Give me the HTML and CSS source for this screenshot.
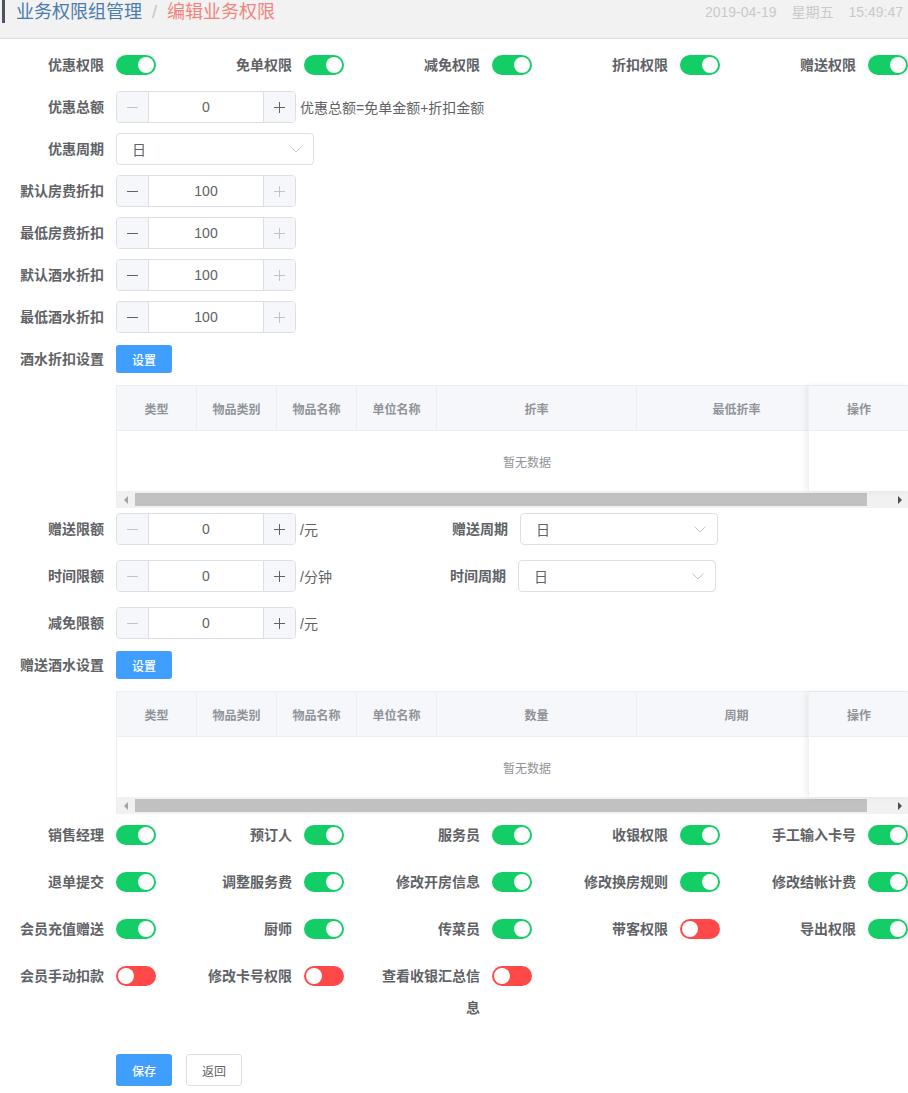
FILE: index.html
```html
<!DOCTYPE html>
<html lang="zh-CN">
<head>
<meta charset="utf-8">
<title>编辑业务权限</title>
<link rel="stylesheet" href="styles.css">
</head>
<body>
<header class="topbar">
  <div class="crumbs">
    <span class="crumb-bar"></span>
    <span class="crumb-parent">业务权限组管理</span>
    <span class="crumb-sep">/</span>
    <span class="crumb-current">编辑业务权限</span>
  </div>
  <div class="clock"><span>2019-04-19</span><span>星期五</span><span>15:49:47</span></div>
</header>

<main class="form">
  <div class="switch-grid first">
    <div class="sw-item"><span class="lbl">优惠权限</span><span class="switch on"></span></div>
    <div class="sw-item"><span class="lbl">免单权限</span><span class="switch on"></span></div>
    <div class="sw-item"><span class="lbl">减免权限</span><span class="switch on"></span></div>
    <div class="sw-item"><span class="lbl">折扣权限</span><span class="switch on"></span></div>
    <div class="sw-item"><span class="lbl">赠送权限</span><span class="switch on"></span></div>
  </div>

  <div class="row">
    <span class="lbl">优惠总额</span>
    <div class="num">
      <span class="num-btn minus dis"><svg width="11" height="11" viewBox="0 0 11 11"><path d="M0 5.5h11" stroke="currentColor" stroke-width="1"/></svg></span>
      <span class="num-val">0</span>
      <span class="num-btn plus"><svg width="11" height="11" viewBox="0 0 11 11"><path d="M0 5.5h11M5.5 0v11" stroke="currentColor" stroke-width="1"/></svg></span>
    </div>
    <span class="unit">优惠总额=免单金额+折扣金额</span>
  </div>

  <div class="row">
    <span class="lbl">优惠周期</span>
    <div class="select"><span>日</span><svg width="12" height="7" viewBox="0 0 12 7"><path d="M0.5 0.5L6 6L11.5 0.5" fill="none" stroke="#c0c4cc" stroke-width="1"/></svg></div>
  </div>

  <div class="row">
    <span class="lbl">默认房费折扣</span>
    <div class="num">
      <span class="num-btn minus"><svg width="11" height="11" viewBox="0 0 11 11"><path d="M0 5.5h11" stroke="currentColor" stroke-width="1"/></svg></span>
      <span class="num-val">100</span>
      <span class="num-btn plus dis"><svg width="11" height="11" viewBox="0 0 11 11"><path d="M0 5.5h11M5.5 0v11" stroke="currentColor" stroke-width="1"/></svg></span>
    </div>
  </div>

  <div class="row">
    <span class="lbl">最低房费折扣</span>
    <div class="num">
      <span class="num-btn minus"><svg width="11" height="11" viewBox="0 0 11 11"><path d="M0 5.5h11" stroke="currentColor" stroke-width="1"/></svg></span>
      <span class="num-val">100</span>
      <span class="num-btn plus dis"><svg width="11" height="11" viewBox="0 0 11 11"><path d="M0 5.5h11M5.5 0v11" stroke="currentColor" stroke-width="1"/></svg></span>
    </div>
  </div>

  <div class="row">
    <span class="lbl">默认酒水折扣</span>
    <div class="num">
      <span class="num-btn minus"><svg width="11" height="11" viewBox="0 0 11 11"><path d="M0 5.5h11" stroke="currentColor" stroke-width="1"/></svg></span>
      <span class="num-val">100</span>
      <span class="num-btn plus dis"><svg width="11" height="11" viewBox="0 0 11 11"><path d="M0 5.5h11M5.5 0v11" stroke="currentColor" stroke-width="1"/></svg></span>
    </div>
  </div>

  <div class="row">
    <span class="lbl">最低酒水折扣</span>
    <div class="num">
      <span class="num-btn minus"><svg width="11" height="11" viewBox="0 0 11 11"><path d="M0 5.5h11" stroke="currentColor" stroke-width="1"/></svg></span>
      <span class="num-val">100</span>
      <span class="num-btn plus dis"><svg width="11" height="11" viewBox="0 0 11 11"><path d="M0 5.5h11M5.5 0v11" stroke="currentColor" stroke-width="1"/></svg></span>
    </div>
  </div>

  <div class="row">
    <span class="lbl">酒水折扣设置</span>
    <button class="btn btn-set">设置</button>
  </div>

  <div class="table">
    <div class="table-scroll">
      <div class="thead">
        <div class="th w80">类型</div>
        <div class="th w80">物品类别</div>
        <div class="th w80">物品名称</div>
        <div class="th w80">单位名称</div>
        <div class="th w200">折率</div>
        <div class="th w200">最低折率</div>
        <div class="th w100">操作</div>
      </div>
      <div class="tbody"><span>暂无数据</span></div>
    </div>
    <div class="fixed-col">
      <div class="th w100 full">操作</div>
      <div class="fixed-body"></div>
    </div>
    <div class="hscroll">
      <span class="arrow left"></span>
      <div class="track"><div class="thumb"></div></div>
      <span class="arrow right"></span>
    </div>
  </div>

  <div class="row after-table">
    <div class="half">
      <span class="lbl">赠送限额</span>
      <div class="num">
        <span class="num-btn minus dis"><svg width="11" height="11" viewBox="0 0 11 11"><path d="M0 5.5h11" stroke="currentColor" stroke-width="1"/></svg></span>
        <span class="num-val">0</span>
        <span class="num-btn plus"><svg width="11" height="11" viewBox="0 0 11 11"><path d="M0 5.5h11M5.5 0v11" stroke="currentColor" stroke-width="1"/></svg></span>
      </div>
      <span class="unit">/元</span>
    </div>
    <span class="lbl">赠送周期</span>
    <div class="select"><span>日</span><svg width="12" height="7" viewBox="0 0 12 7"><path d="M0.5 0.5L6 6L11.5 0.5" fill="none" stroke="#c0c4cc" stroke-width="1"/></svg></div>
  </div>

  <div class="row loose">
    <div class="half shift">
      <span class="lbl">时间限额</span>
      <div class="num">
        <span class="num-btn minus dis"><svg width="11" height="11" viewBox="0 0 11 11"><path d="M0 5.5h11" stroke="currentColor" stroke-width="1"/></svg></span>
        <span class="num-val">0</span>
        <span class="num-btn plus"><svg width="11" height="11" viewBox="0 0 11 11"><path d="M0 5.5h11M5.5 0v11" stroke="currentColor" stroke-width="1"/></svg></span>
      </div>
      <span class="unit">/分钟</span>
    </div>
    <span class="lbl">时间周期</span>
    <div class="select"><span>日</span><svg width="12" height="7" viewBox="0 0 12 7"><path d="M0.5 0.5L6 6L11.5 0.5" fill="none" stroke="#c0c4cc" stroke-width="1"/></svg></div>
  </div>

  <div class="row loose">
    <span class="lbl">减免限额</span>
    <div class="num">
      <span class="num-btn minus dis"><svg width="11" height="11" viewBox="0 0 11 11"><path d="M0 5.5h11" stroke="currentColor" stroke-width="1"/></svg></span>
      <span class="num-val">0</span>
      <span class="num-btn plus"><svg width="11" height="11" viewBox="0 0 11 11"><path d="M0 5.5h11M5.5 0v11" stroke="currentColor" stroke-width="1"/></svg></span>
    </div>
    <span class="unit">/元</span>
  </div>

  <div class="row">
    <span class="lbl">赠送酒水设置</span>
    <button class="btn btn-set">设置</button>
  </div>

  <div class="table">
    <div class="table-scroll">
      <div class="thead">
        <div class="th w80">类型</div>
        <div class="th w80">物品类别</div>
        <div class="th w80">物品名称</div>
        <div class="th w80">单位名称</div>
        <div class="th w200">数量</div>
        <div class="th w200">周期</div>
        <div class="th w100">操作</div>
      </div>
      <div class="tbody"><span>暂无数据</span></div>
    </div>
    <div class="fixed-col">
      <div class="th w100 full">操作</div>
      <div class="fixed-body"></div>
    </div>
    <div class="hscroll">
      <span class="arrow left"></span>
      <div class="track"><div class="thumb"></div></div>
      <span class="arrow right"></span>
    </div>
  </div>

  <div class="switch-grid after-table">
    <div class="sw-item"><span class="lbl">销售经理</span><span class="switch on"></span></div>
    <div class="sw-item"><span class="lbl">预订人</span><span class="switch on"></span></div>
    <div class="sw-item"><span class="lbl">服务员</span><span class="switch on"></span></div>
    <div class="sw-item"><span class="lbl">收银权限</span><span class="switch on"></span></div>
    <div class="sw-item"><span class="lbl">手工输入卡号</span><span class="switch on"></span></div>

    <div class="sw-item"><span class="lbl">退单提交</span><span class="switch on"></span></div>
    <div class="sw-item"><span class="lbl">调整服务费</span><span class="switch on"></span></div>
    <div class="sw-item"><span class="lbl">修改开房信息</span><span class="switch on"></span></div>
    <div class="sw-item"><span class="lbl">修改换房规则</span><span class="switch on"></span></div>
    <div class="sw-item"><span class="lbl">修改结帐计费</span><span class="switch on"></span></div>

    <div class="sw-item"><span class="lbl">会员充值赠送</span><span class="switch on"></span></div>
    <div class="sw-item"><span class="lbl">厨师</span><span class="switch on"></span></div>
    <div class="sw-item"><span class="lbl">传菜员</span><span class="switch on"></span></div>
    <div class="sw-item"><span class="lbl">带客权限</span><span class="switch off"></span></div>
    <div class="sw-item"><span class="lbl">导出权限</span><span class="switch on"></span></div>

    <div class="sw-item"><span class="lbl">会员手动扣款</span><span class="switch off"></span></div>
    <div class="sw-item"><span class="lbl">修改卡号权限</span><span class="switch off"></span></div>
    <div class="sw-item"><span class="lbl">查看收银汇总信息</span><span class="switch off"></span></div>
  </div>

  <div class="actions">
    <button class="btn btn-primary">保存</button>
    <button class="btn btn-plain">返回</button>
  </div>
</main>
</body>
</html>
```

FILE: styles.css
```css
* { box-sizing: border-box; }
html, body { margin: 0; padding: 0; }
body {
  width: 908px;
  overflow: hidden;
  background: #fff;
  font-family: "Liberation Sans", "Noto Sans CJK SC", sans-serif;
  font-size: 14px;
  color: #606266;
}

/* top bar */
.topbar {
  height: 39px;
  background: #f2f2f2;
  border-bottom: 1px solid #dcdcdc;
  display: flex;
  justify-content: space-between;
  align-items: flex-start;
}
.crumbs {
  display: flex;
  align-items: flex-start;
  height: 24px;
  line-height: 24px;
  font-size: 18px;
}
.crumb-bar {
  width: 3px;
  height: 23px;
  background: #4a5360;
  margin-left: 2px;
  margin-right: 11px;
}
.crumb-parent { color: #4a7cae; }
.crumb-sep { color: #c0c4cc; margin: 0 10px; }
.crumb-current { color: #f0857f; }
.clock {
  display: flex;
  gap: 15px;
  color: #c8c9cc;
  font-size: 14px;
  line-height: 24px;
  padding-right: 5px;
}

/* form */
.form { display: flex; flex-direction: column; padding-bottom: 20px; }

.lbl {
  width: 104px;
  flex: none;
  text-align: right;
  font-weight: 700;
  font-size: 14px;
  line-height: 32px;
  color: #606266;
}

.switch-grid {
  display: grid;
  grid-template-columns: repeat(5, 188px);
  row-gap: 15px;
}
.switch-grid.first { margin-top: 10px; }
.sw-item { display: flex; align-items: flex-start; }

.switch {
  flex: none;
  position: relative;
  width: 40px;
  height: 20px;
  border-radius: 10px;
  margin-left: 12px;
  margin-top: 6px;
}
.switch.on { background: #13ce66; }
.switch.off { background: #ff4949; }
.switch::after {
  content: "";
  position: absolute;
  top: 2px;
  width: 16px;
  height: 16px;
  border-radius: 50%;
  background: #fff;
}
.switch.on::after { left: 22px; }
.switch.off::after { left: 2px; }

.row {
  display: flex;
  align-items: center;
  height: 32px;
  margin-top: 10px;
}
.row.after-table { margin-top: 5px; }
.row.loose { margin-top: 15px; }
.half { width: 404px; flex: none; display: flex; align-items: center; }
.half.shift { width: 402px; }

.num {
  margin-left: 12px;
  width: 180px;
  height: 32px;
  flex: none;
  border: 1px solid #dcdfe6;
  border-radius: 4px;
  display: flex;
  overflow: hidden;
}
.num-btn {
  width: 32px;
  flex: none;
  background: #f5f7fa;
  color: #606266;
  display: flex;
  align-items: center;
  justify-content: center;
}
.num-btn.minus { border-right: 1px solid #dcdfe6; }
.num-btn.plus { border-left: 1px solid #dcdfe6; }
.num-btn.dis { color: #c0c4cc; }
.num-val {
  flex: 1;
  text-align: center;
  line-height: 30px;
  font-size: 14px;
  color: #606266;
}
.unit { margin-left: 4px; font-size: 14px; color: #606266; }

.select {
  margin-left: 12px;
  width: 198px;
  height: 32px;
  flex: none;
  border: 1px solid #dcdfe6;
  border-radius: 4px;
  display: flex;
  align-items: center;
  justify-content: space-between;
  padding: 0 11px 0 15px;
  font-size: 14px;
  color: #606266;
}

.btn {
  font-family: "Liberation Sans", "Noto Sans CJK SC", sans-serif;
  font-size: 12px;
  border-radius: 3px;
  padding: 0;
  cursor: pointer;
}
.btn-set {
  margin-left: 12px;
  width: 56px;
  height: 28px;
  border: none;
  background: #409eff;
  color: #fff;
  font-weight: 500;
}

/* table */
.table {
  position: relative;
  margin-top: 10px;
  margin-left: 116px;
  width: 792px;
  border-top: 1px solid #ebeef5;
  border-left: 1px solid #ebeef5;
}
.table-scroll { overflow: hidden; }
.thead {
  display: flex;
  width: 820px;
  height: 45px;
  background: #f5f7fa;
  border-bottom: 1px solid #ebeef5;
}
.th {
  flex: none;
  display: flex;
  align-items: center;
  justify-content: center;
  border-right: 1px solid #ebeef5;
  font-size: 12px;
  font-weight: 700;
  color: #909399;
}
.w80 { width: 80px; }
.w200 { width: 200px; }
.w100 { width: 100px; }
.th.full {
  height: 45px;
  background: #f5f7fa;
  border-bottom: 1px solid #ebeef5;
  border-right: none;
}
.tbody {
  width: 820px;
  height: 60px;
  display: flex;
  align-items: center;
  justify-content: center;
  font-size: 12px;
  color: #909399;
}
.fixed-col {
  position: absolute;
  top: 0;
  right: 0;
  width: 100px;
  height: 105px;
  background: #fff;
  box-shadow: -2px 0 6px rgba(0, 0, 0, 0.07);
  border-left: 1px solid #f0f0f0;
}
.fixed-body { height: 60px; }

.hscroll {
  height: 17px;
  display: flex;
  background: #f1f1f1;
}
.arrow {
  width: 17px;
  height: 17px;
  flex: none;
  display: flex;
  align-items: center;
  justify-content: center;
}
.arrow::before {
  content: "";
  width: 0;
  height: 0;
  border-top: 4px solid transparent;
  border-bottom: 4px solid transparent;
}
.arrow.left::before { border-right: 4px solid #a3a3a3; }
.arrow.right::before { border-left: 4px solid #505050; }
.track { flex: 1; padding: 2px 0; }
.thumb {
  margin-left: 1px;
  width: 732px;
  height: 13px;
  background: #c1c1c1;
}

.switch-grid.after-table { margin-top: 5px; }

.actions {
  display: flex;
  gap: 14px;
  margin-top: 30px;
  padding-left: 116px;
}
.btn-primary {
  width: 56px;
  height: 32px;
  border: none;
  background: #409eff;
  color: #fff;
  font-weight: 500;
}
.btn-plain {
  width: 56px;
  height: 32px;
  border: 1px solid #dcdfe6;
  background: #fff;
  color: #606266;
}
```
